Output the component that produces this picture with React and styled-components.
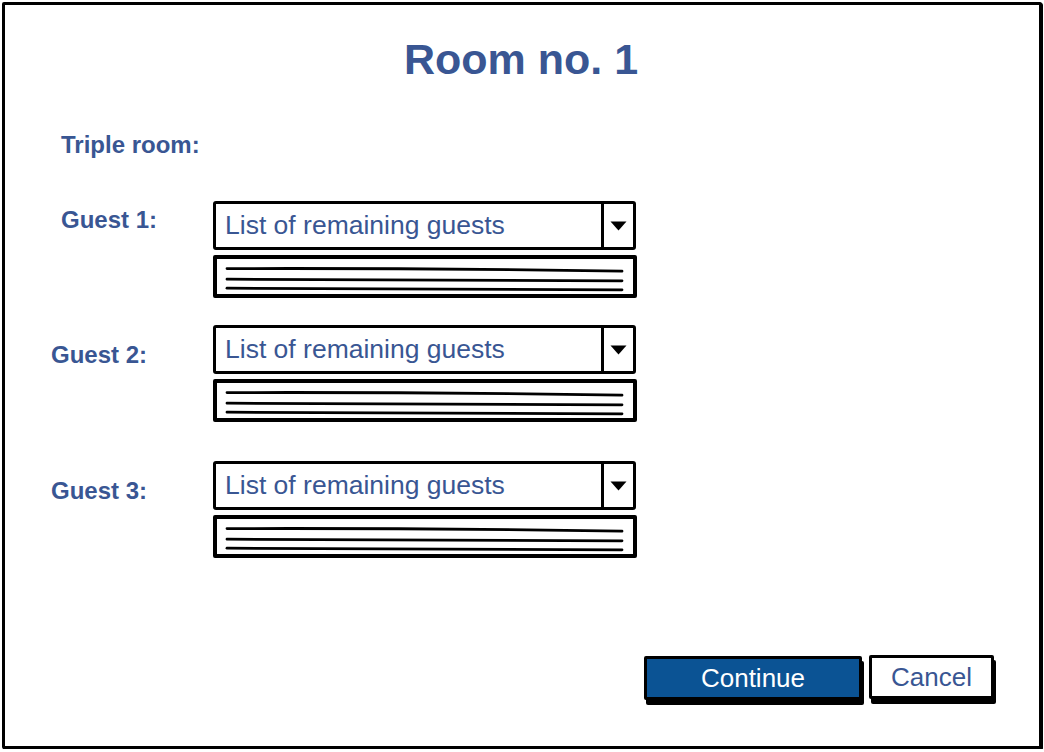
import React from "react";
import styled, { createGlobalStyle } from "styled-components";

const Global = createGlobalStyle`
  html, body { margin: 0; padding: 0; background: #fff; }
  body { font-family: "Liberation Sans", Arial, sans-serif; }
`;

const BLUE = "#395693";

const Frame = styled.div`
  box-sizing: border-box;
  width: 1040px;
  height: 747px;
  margin: 2px 0 0 2px;
  border: 3px solid #000;
  border-radius: 2px;
  box-shadow: 1px 1px 0 #000;
  background: #fff;
  display: flex;
  flex-direction: column;
  padding: 33px 42px 0 46px;
`;

const Title = styled.h1`
  margin: 0;
  text-align: center;
  font-size: 43px;
  line-height: 43px;
  font-weight: 700;
  color: ${BLUE};
  padding-right: 6px;
`;

const Label = styled.div`
  font-size: 24px;
  line-height: 24px;
  font-weight: 700;
  color: ${BLUE};
  padding-left: ${(p) => p.$indent || 0}px;
  padding-top: ${(p) => p.$top || 0}px;
  box-sizing: border-box;
  width: ${(p) => (p.$width ? p.$width + "px" : "auto")};
  flex-shrink: 0;
`;

const Heading = styled(Label)`
  margin-top: 52px;
`;

const Row = styled.div`
  display: flex;
  align-items: flex-start;
  margin-top: ${(p) => p.$gap}px;
`;

const Combo = styled.div`
  display: flex;
  flex-direction: column;
  gap: 5px;
  width: 424px;
`;

const Select = styled.div`
  box-sizing: border-box;
  width: 423px;
  height: 49px;
  border: 3px solid #000;
  border-radius: 3px;
  display: flex;
  align-items: stretch;
  background: #fff;
`;

const SelectText = styled.div`
  flex: 1;
  display: flex;
  align-items: center;
  padding-left: 9px;
  font-size: 26.5px;
  color: ${BLUE};
  white-space: nowrap;
`;

const ArrowCell = styled.div`
  box-sizing: border-box;
  width: 32px;
  border-left: 3px solid #000;
  display: flex;
  align-items: center;
  justify-content: center;
`;

const ListBox = styled.div`
  box-sizing: border-box;
  width: 424px;
  height: 43px;
  border: 4px solid #000;
  border-radius: 2px;
  background: #fff;
  padding: 0 6px 0 5px;
  display: flex;
`;

const LinesSvg = styled.svg`
  width: 100%;
  height: 100%;
  display: block;
`;

const Actions = styled.div`
  margin-top: 97px;
  display: flex;
  justify-content: flex-end;
  align-items: flex-start;
  gap: 7px;
  padding-right: 3px;
`;

const Button = styled.button`
  box-sizing: border-box;
  width: ${(p) => p.$w}px;
  height: 44px;
  margin-top: ${(p) => p.$top || 0}px;
  border: 3px solid #000;
  border-radius: 2px;
  box-shadow: 2px 5px 0 #000;
  background: ${(p) => (p.$primary ? "#0b5394" : "#fff")};
  color: ${(p) => (p.$primary ? "#fff" : BLUE)};
  font-family: "Liberation Sans", Arial, sans-serif;
  font-size: 26px;
  padding: 0;
  display: flex;
  align-items: center;
  justify-content: center;
  cursor: pointer;
`;

function Arrow() {
  return (
    <svg width="17" height="10" viewBox="0 0 17 10">
      <path d="M0.5 0.5 L16.5 0.5 L8.5 9.5 Z" fill="#000" />
    </svg>
  );
}

function Lines() {
  return (
    <LinesSvg viewBox="0 0 405 35" preserveAspectRatio="none">
      <g fill="none" stroke="#000" strokeLinecap="round">
        <path d="M5 9.6 Q200 9 400 12.2" strokeWidth="2.8" />
        <path d="M5 20.2 Q200 20.4 400 21.8" strokeWidth="2.8" />
        <path d="M5 29.2 Q200 30.2 400 30.8" strokeWidth="2.8" />
      </g>
    </LinesSvg>
  );
}

function GuestSelect() {
  return (
    <Combo>
      <Select>
        <SelectText>List of remaining guests</SelectText>
        <ArrowCell>
          <Arrow />
        </ArrowCell>
      </Select>
      <ListBox>
        <Lines />
      </ListBox>
    </Combo>
  );
}

const guests = [
  { label: "Guest 1:", indent: 10, top: 7, gap: 44 },
  { label: "Guest 2:", indent: 0, top: 18, gap: 27 },
  { label: "Guest 3:", indent: 0, top: 18, gap: 39 },
];

export default function App() {
  return (
    <>
      <Global />
      <Frame>
        <Title>Room no. 1</Title>
        <Heading $indent={10}>Triple room:</Heading>
        {guests.map((g) => (
          <Row key={g.label} $gap={g.gap}>
            <Label $indent={g.indent} $top={g.top} $width={162}>
              {g.label}
            </Label>
            <GuestSelect />
          </Row>
        ))}
        <Actions>
          <Button $primary $w={218} $top={1}>
            Continue
          </Button>
          <Button $w={125}>Cancel</Button>
        </Actions>
      </Frame>
    </>
  );
}
